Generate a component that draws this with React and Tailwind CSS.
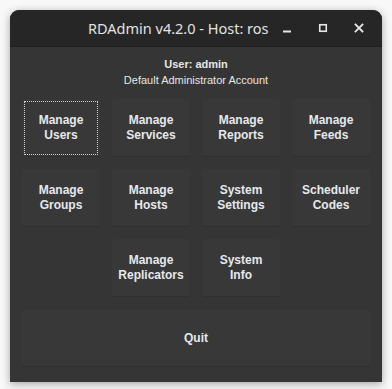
export default function App() {
  const buttons = [
    ['Manage', 'Users'],
    ['Manage', 'Services'],
    ['Manage', 'Reports'],
    ['Manage', 'Feeds'],
    ['Manage', 'Groups'],
    ['Manage', 'Hosts'],
    ['System', 'Settings'],
    ['Scheduler', 'Codes'],
    null,
    ['Manage', 'Replicators'],
    ['System', 'Info'],
  ];

  return (
    <div className="w-[392px] h-[389px] bg-[#f8f8f8] p-[10px] font-['Liberation_Sans',sans-serif]">
      <div className="w-[372px] h-[372px] rounded-t-[9px] bg-[#353535] shadow-[0_2px_8px_rgba(0,0,0,0.35)] flex flex-col overflow-hidden">
        {/* title bar */}
        <div className="h-[37px] bg-[#262626] border-b border-[#1f1f1f] flex items-center shrink-0">
          <div className="ml-[78px] whitespace-nowrap text-[14.5px] text-[#e2e2e2] font-['Noto_Sans',sans-serif] leading-none">
            RDAdmin v4.2.0 - Host: ros
          </div>
          <div className="flex items-center ml-auto mr-[6px]">
            <div className="w-[36px] h-[24px] flex items-center justify-center">
              <svg width="10" height="10" viewBox="0 0 10 10">
                <rect x="1" y="7.5" width="8" height="2" fill="#e6e6e6" />
              </svg>
            </div>
            <div className="w-[36px] h-[24px] flex items-center justify-center">
              <svg width="10" height="10" viewBox="0 0 10 10">
                <rect x="1.75" y="1.75" width="6.5" height="6.5" fill="none" stroke="#e6e6e6" strokeWidth="1.6" />
              </svg>
            </div>
            <div className="w-[36px] h-[24px] flex items-center justify-center">
              <svg width="10" height="10" viewBox="0 0 10 10">
                <path d="M1.5 1.5L8.5 8.5M8.5 1.5L1.5 8.5" stroke="#e6e6e6" strokeWidth="1.8" strokeLinecap="square" />
              </svg>
            </div>
          </div>
        </div>

        {/* body */}
        <div className="flex-1 px-[12px] pb-[15px] flex flex-col">
          <div className="pt-[9px] text-center text-[11px] text-[#e6e6e6] leading-[16px]">
            <div className="font-bold">User: admin</div>
            <div>Default Administrator Account</div>
          </div>
          <div className="mt-[11px] grid grid-cols-4 gap-[12px] auto-rows-[58px]">
            {buttons.map((b, i) =>
              b ? (
                <button
                  key={i}
                  className={`bg-[#383838] border-b border-[#2f2f2f] rounded-[2px] text-[12px] font-bold leading-[15px] text-[#e6e8ec] flex flex-col items-center justify-center ${
                    i === 0 ? 'outline-dotted outline-1 outline-[#d0d0d0] outline-offset-[-3px]' : ''
                  }`}
                >
                  <span>{b[0]}</span>
                  <span>{b[1]}</span>
                </button>
              ) : (
                <div key={i} />
              )
            )}
            <button className="col-span-4 bg-[#383838] border-b border-[#2f2f2f] rounded-[2px] text-[12px] font-bold text-[#e6e8ec]">
              Quit
            </button>
          </div>
        </div>
      </div>
    </div>
  );
}
